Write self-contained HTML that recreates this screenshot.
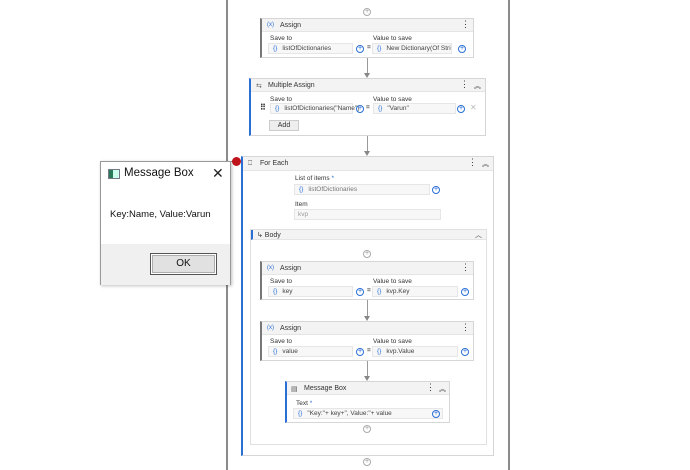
<!DOCTYPE html>
<html><head><meta charset="utf-8"><style>
*{box-sizing:border-box;margin:0;padding:0}
body{width:690px;height:470px;background:#fff;position:relative;overflow:hidden;font-family:"Liberation Sans",sans-serif;font-size:7px;color:#333}
.a{position:absolute}
.box{position:absolute;border:1px solid #d6d6d6;background:#fff}
.hdr{position:absolute;left:0;right:0;top:0;height:13px;background:#f3f3f3;border-bottom:1px solid #e4e4e4}
.hdr span{position:absolute;top:3px;font-size:7px;color:#333}
.fld{position:absolute;height:11px;background:#f7f7f7;border:1px solid #e6e6e6;font-size:6.5px;line-height:9px;color:#444}
.br{color:#2a6fd6;margin:0 5px 0 4px}
.plus{position:absolute;width:8px;height:8px;border:1px solid #2a6fd6;border-radius:50%;font-size:7px;line-height:6px;text-align:center;color:#2a6fd6}
.cp{position:absolute;width:8px;height:8px;border:1px solid #aaa;border-radius:50%;font-size:7px;line-height:6px;text-align:center;color:#999;background:#fff}
.vl{position:absolute;width:1px;background:#999}
.ar{position:absolute;width:0;height:0;border-left:3px solid transparent;border-right:3px solid transparent;border-top:5px solid #888}
.lbl{position:absolute;font-size:6.5px;color:#333}
.dots{position:absolute;font-size:8px;color:#555;font-weight:bold;line-height:3px;width:3px}
</style></head><body>
<div class="a" style="left:226px;top:0;width:2px;height:470px;background:#8a8a8a"></div>
<div class="a" style="left:508px;top:0;width:2px;height:470px;background:#8a8a8a"></div>
<div class="a" style="left:228px;top:161px;width:5px;height:1px;background:#8a8a8a"></div>

<div class="cp" style="left:363px;top:8px">+</div>

<!-- Assign 1 -->
<div class="box" style="left:260px;top:18px;width:214px;height:40px;border-left:2px solid #777">
 <div class="hdr"><span style="left:5px;color:#2a6fd6;font-size:6px">(x)</span><span style="left:18px">Assign</span><span style="right:3px;top:0;font-size:9px">⋮</span></div>
 <div class="lbl" style="left:8px;top:16px">Save to</div>
 <div class="lbl" style="left:111px;top:16px">Value to save</div>
 <div class="fld" style="left:6px;top:24px;width:85px"><span class="br">{}</span>listOfDictionaries</div>
 <div class="plus" style="left:94px;top:26px">+</div>
 <div class="lbl" style="left:105px;top:25px;font-weight:bold">=</div>
 <div class="fld" style="left:110px;top:24px;width:80px"><span class="br">{}</span>New Dictionary(Of Stri</div>
 <div class="plus" style="left:196px;top:26px">+</div>
</div>
<div class="vl" style="left:367px;top:58px;height:16px"></div><div class="ar" style="left:364px;top:73px"></div>

<!-- Multiple Assign -->
<div class="box" style="left:249px;top:78px;width:237px;height:58px;border-left:2px solid #2a6fd6">
 <div class="hdr"><span style="left:5px;color:#666">⇆</span><span style="left:17px">Multiple Assign</span><span style="right:16px;top:0;font-size:9px">⋮</span><span style="right:4px;top:2px;font-size:7px">︽</span></div>
 <div class="lbl" style="left:19px;top:17px">Save to</div>
 <div class="lbl" style="left:122px;top:17px">Value to save</div>
 <div class="lbl" style="left:9px;top:24px;font-size:8px;font-weight:bold">⠿</div>
 <div class="fld" style="left:19px;top:24px;width:83px"><span class="br">{}</span>listOfDictionaries("Name")</div>
 <div class="plus" style="left:105px;top:26px">+</div>
 <div class="lbl" style="left:115px;top:25px;font-weight:bold">=</div>
 <div class="fld" style="left:122px;top:24px;width:83px"><span class="br">{}</span>"Varun"</div>
 <div class="plus" style="left:206px;top:26px">+</div>
 <div class="lbl" style="left:219px;top:24px;color:#bbb;font-size:8px">✕</div>
 <div class="a" style="left:18px;top:41px;width:30px;height:11px;background:#eee;border:1px solid #ccc;font-size:7px;text-align:center;line-height:9px">Add</div>
</div>
<div class="vl" style="left:367px;top:136px;height:16px"></div><div class="ar" style="left:364px;top:151px"></div>

<!-- For Each -->
<div class="a" style="left:232px;top:157px;width:9px;height:9px;border-radius:50%;background:#c0141c"></div>
<div class="box" style="left:241px;top:156px;width:253px;height:300px;border-left:2px solid #2a6fd6">
 <div class="hdr" style="height:14px"><span style="left:5px;color:#555">⎕</span><span style="left:17px">For Each</span><span style="right:16px;top:0;font-size:9px">⋮</span><span style="right:4px;top:2px">︽</span></div>
 <div class="lbl" style="left:52px;top:18px">List of items <span style="color:#2a6fd6">*</span></div>
 <div class="fld" style="left:51px;top:27px;width:136px;color:#777"><span class="br">{}</span>listOfDictionaries</div>
 <div class="plus" style="left:189px;top:29px">+</div>
 <div class="lbl" style="left:52px;top:44px">Item</div>
 <div class="fld" style="left:51px;top:52px;width:147px;color:#999;padding-left:3px">kvp</div>
 <!-- Body -->
 <div class="box" style="left:7px;top:72px;width:237px;height:216px;border-color:#e0e0e0">
  <div class="hdr" style="height:10px;border-left:2px solid #2a6fd6"><span style="left:4px;top:1px">↳ Body</span><span style="right:4px;top:0">︿</span></div>
 </div>
</div>
<div class="cp" style="left:363px;top:250px">+</div>

<!-- Assign key -->
<div class="box" style="left:260px;top:261px;width:214px;height:39px;border-left:2px solid #777">
 <div class="hdr"><span style="left:5px;color:#2a6fd6;font-size:6px">(x)</span><span style="left:18px">Assign</span><span style="right:3px;top:0;font-size:9px">⋮</span></div>
 <div class="lbl" style="left:8px;top:16px">Save to</div>
 <div class="lbl" style="left:111px;top:16px">Value to save</div>
 <div class="fld" style="left:6px;top:24px;width:85px"><span class="br">{}</span>key</div>
 <div class="plus" style="left:94px;top:26px">+</div>
 <div class="lbl" style="left:105px;top:25px;font-weight:bold">=</div>
 <div class="fld" style="left:110px;top:24px;width:86px"><span class="br">{}</span>kvp.Key</div>
 <div class="plus" style="left:199px;top:26px">+</div>
</div>
<div class="vl" style="left:367px;top:300px;height:17px"></div><div class="ar" style="left:364px;top:316px"></div>

<!-- Assign value -->
<div class="box" style="left:260px;top:321px;width:214px;height:40px;border-left:2px solid #777">
 <div class="hdr"><span style="left:5px;color:#2a6fd6;font-size:6px">(x)</span><span style="left:18px">Assign</span><span style="right:3px;top:0;font-size:9px">⋮</span></div>
 <div class="lbl" style="left:8px;top:16px">Save to</div>
 <div class="lbl" style="left:111px;top:16px">Value to save</div>
 <div class="fld" style="left:6px;top:24px;width:85px"><span class="br">{}</span>value</div>
 <div class="plus" style="left:94px;top:26px">+</div>
 <div class="lbl" style="left:105px;top:25px;font-weight:bold">=</div>
 <div class="fld" style="left:110px;top:24px;width:86px"><span class="br">{}</span>kvp.Value</div>
 <div class="plus" style="left:199px;top:26px">+</div>
</div>
<div class="vl" style="left:367px;top:361px;height:16px"></div><div class="ar" style="left:364px;top:376px"></div>

<!-- Message Box activity -->
<div class="box" style="left:285px;top:381px;width:165px;height:42px;border-left:2px solid #2a6fd6">
 <div class="hdr"><span style="left:4px;color:#555">▤</span><span style="left:17px">Message Box</span><span style="right:14px;top:0;font-size:9px">⋮</span><span style="right:3px;top:2px">︽</span></div>
 <div class="lbl" style="left:9px;top:18px">Text <span style="color:#2a6fd6">*</span></div>
 <div class="fld" style="left:6px;top:26px;width:150px"><span class="br">{}</span>"Key:"+ key+", Value:"+ value</div>
 <div class="plus" style="left:145px;top:28px">+</div>
</div>
<div class="cp" style="left:363px;top:425px">+</div>
<div class="cp" style="left:363px;top:458px">+</div>

<!-- Dialog -->
<div class="a" style="left:100px;top:161px;width:131px;height:124px;background:#fff;border:1px solid #999;box-shadow:1px 1px 3px rgba(0,0,0,.25)">
 <div class="a" style="left:7px;top:7px;width:12px;height:10px;border:1px solid #778;background:linear-gradient(90deg,#2a7a5a 40%,#cfe 40%)"></div>
 <div class="a" style="left:23px;top:5px;font-size:11.5px;color:#111">Message Box</div>
 <div class="a" style="left:111px;top:3px;font-size:14px;color:#222">✕</div>
 <div class="a" style="left:9px;top:47px;font-size:9.5px;color:#111">Key:Name, Value:Varun</div>
 <div class="a" style="left:0;top:82px;width:129px;height:41px;background:#f0f0f0">
  <div class="a" style="left:49px;top:9px;width:67px;height:22px;border:1px solid #555;background:#e1e1e1;box-shadow:inset 0 0 0 1px #fff,inset 0 0 0 2px #adadad;font-size:10px;text-align:center;line-height:20px;color:#111">OK</div>
 </div>
</div>
</body></html>
